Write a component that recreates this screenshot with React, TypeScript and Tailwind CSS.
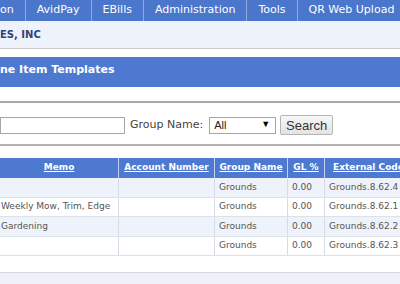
import React from 'react';

const navItems = ['AvidPay', 'EBills', 'Administration', 'Tools', 'QR Web Upload'];

const columns = [
  { label: 'Memo', w: 'w-[119px]' },
  { label: 'Account Number', w: 'w-[96px]' },
  { label: 'Group Name', w: 'w-[73px]' },
  { label: 'GL %', w: 'w-[37px]' },
  { label: 'External Code', w: 'w-[88px]' },
];

const rows = [
  { memo: '', account: '', group: 'Grounds', gl: '0.00', code: 'Grounds.8.62.4' },
  { memo: 'Weekly Mow, Trim, Edge', account: '', group: 'Grounds', gl: '0.00', code: 'Grounds.8.62.1' },
  { memo: 'Gardening', account: '', group: 'Grounds', gl: '0.00', code: 'Grounds.8.62.2' },
  { memo: '', account: '', group: 'Grounds', gl: '0.00', code: 'Grounds.8.62.3' },
];

export default function App() {
  return (
    <div className="w-[400px] h-[284px] overflow-hidden bg-white flex flex-col font-['DejaVu_Sans',Verdana,sans-serif]">
      {/* top nav */}
      <div className="flex h-[21px] shrink-0 bg-[#4a76cc] text-white text-[11px] whitespace-nowrap">
        <div className="flex items-center pr-[11px] border-r border-[#8fa8dc]">on</div>
        {navItems.map((item) => (
          <div key={item} className="flex items-center px-[11px] border-r border-[#8fa8dc]">
            {item}
          </div>
        ))}
      </div>

      {/* company strip */}
      <div className="h-[28px] shrink-0 flex items-center bg-[#eef2fa] border-b border-[#c9c9c9] text-[10px] font-bold text-[#2f4377]">
        ES, INC
      </div>

      <div className="h-[8px] shrink-0" />

      {/* page title */}
      <div className="h-[30px] shrink-0 flex items-center pb-[3px] bg-[#4d79d0] text-white text-[11px] font-bold whitespace-nowrap">
        ne Item Templates
      </div>

      <div className="h-[14px] shrink-0" />
      <div className="h-[2px] shrink-0 bg-[#a9a9a9]" />

      {/* search row */}
      <div className="mt-[12px] h-[20px] shrink-0 flex items-center">
        <div className="w-[125px] h-[17px] border border-[#a6a6a6] bg-white" />
        <span className="ml-[5px] text-[11px] text-[#444]">Group Name:</span>
        <div className="ml-[6px] w-[67px] h-[17px] border border-[#a6a6a6] bg-white flex items-center justify-between pl-[4px] pr-[5px] font-['Liberation_Sans',Arial,sans-serif] text-[11px] text-[#222]">
          <span>All</span>
          <span className="text-[9px] text-black">▼</span>
        </div>
        <button className="ml-[4px] w-[53px] h-[20px] border border-[#b5b5b5] rounded-[2px] bg-gradient-to-b from-[#f7f7f7] to-[#e3e3e3] font-['Liberation_Sans',Arial,sans-serif] text-[13px] text-[#333] leading-none">
          Search
        </button>
      </div>

      <div className="mt-[9px] h-[2px] shrink-0 bg-[#b3b3b3]" />
      <div className="h-[12px] shrink-0" />

      {/* table */}
      <div className="flex flex-col shrink-0">
        <div className="flex h-[20px] bg-[#4d79d0]">
          {columns.map((c) => (
            <div
              key={c.label}
              className={`${c.w} shrink-0 flex items-center justify-center border-r border-[#c5d0ea] text-[9px] font-bold text-white underline whitespace-nowrap`}
            >
              {c.label}
            </div>
          ))}
        </div>
        {rows.map((r, i) => (
          <div
            key={i}
            className={`flex h-[19.5px] border-b border-[#dde1ea] text-[9px] text-[#555] whitespace-nowrap ${i % 2 === 0 ? 'bg-[#eef2fa]' : 'bg-white'}`}
          >
            <div className="w-[119px] shrink-0 flex items-center pl-[1px] border-r border-[#d6dbe5]">{r.memo}</div>
            <div className="w-[96px] shrink-0 flex items-center pl-[4px] border-r border-[#d6dbe5]">{r.account}</div>
            <div className="w-[73px] shrink-0 flex items-center pl-[4px] border-r border-[#d6dbe5]">{r.group}</div>
            <div className="w-[37px] shrink-0 flex items-center pl-[4px] border-r border-[#d6dbe5]">{r.gl}</div>
            <div className="w-[88px] shrink-0 flex items-center pl-[4px]">{r.code}</div>
          </div>
        ))}
      </div>

      <div className="h-[16px] shrink-0" />
      <div className="flex-1 border-t border-[#d5dae3] bg-[#eef2f8]" />
    </div>
  );
}
